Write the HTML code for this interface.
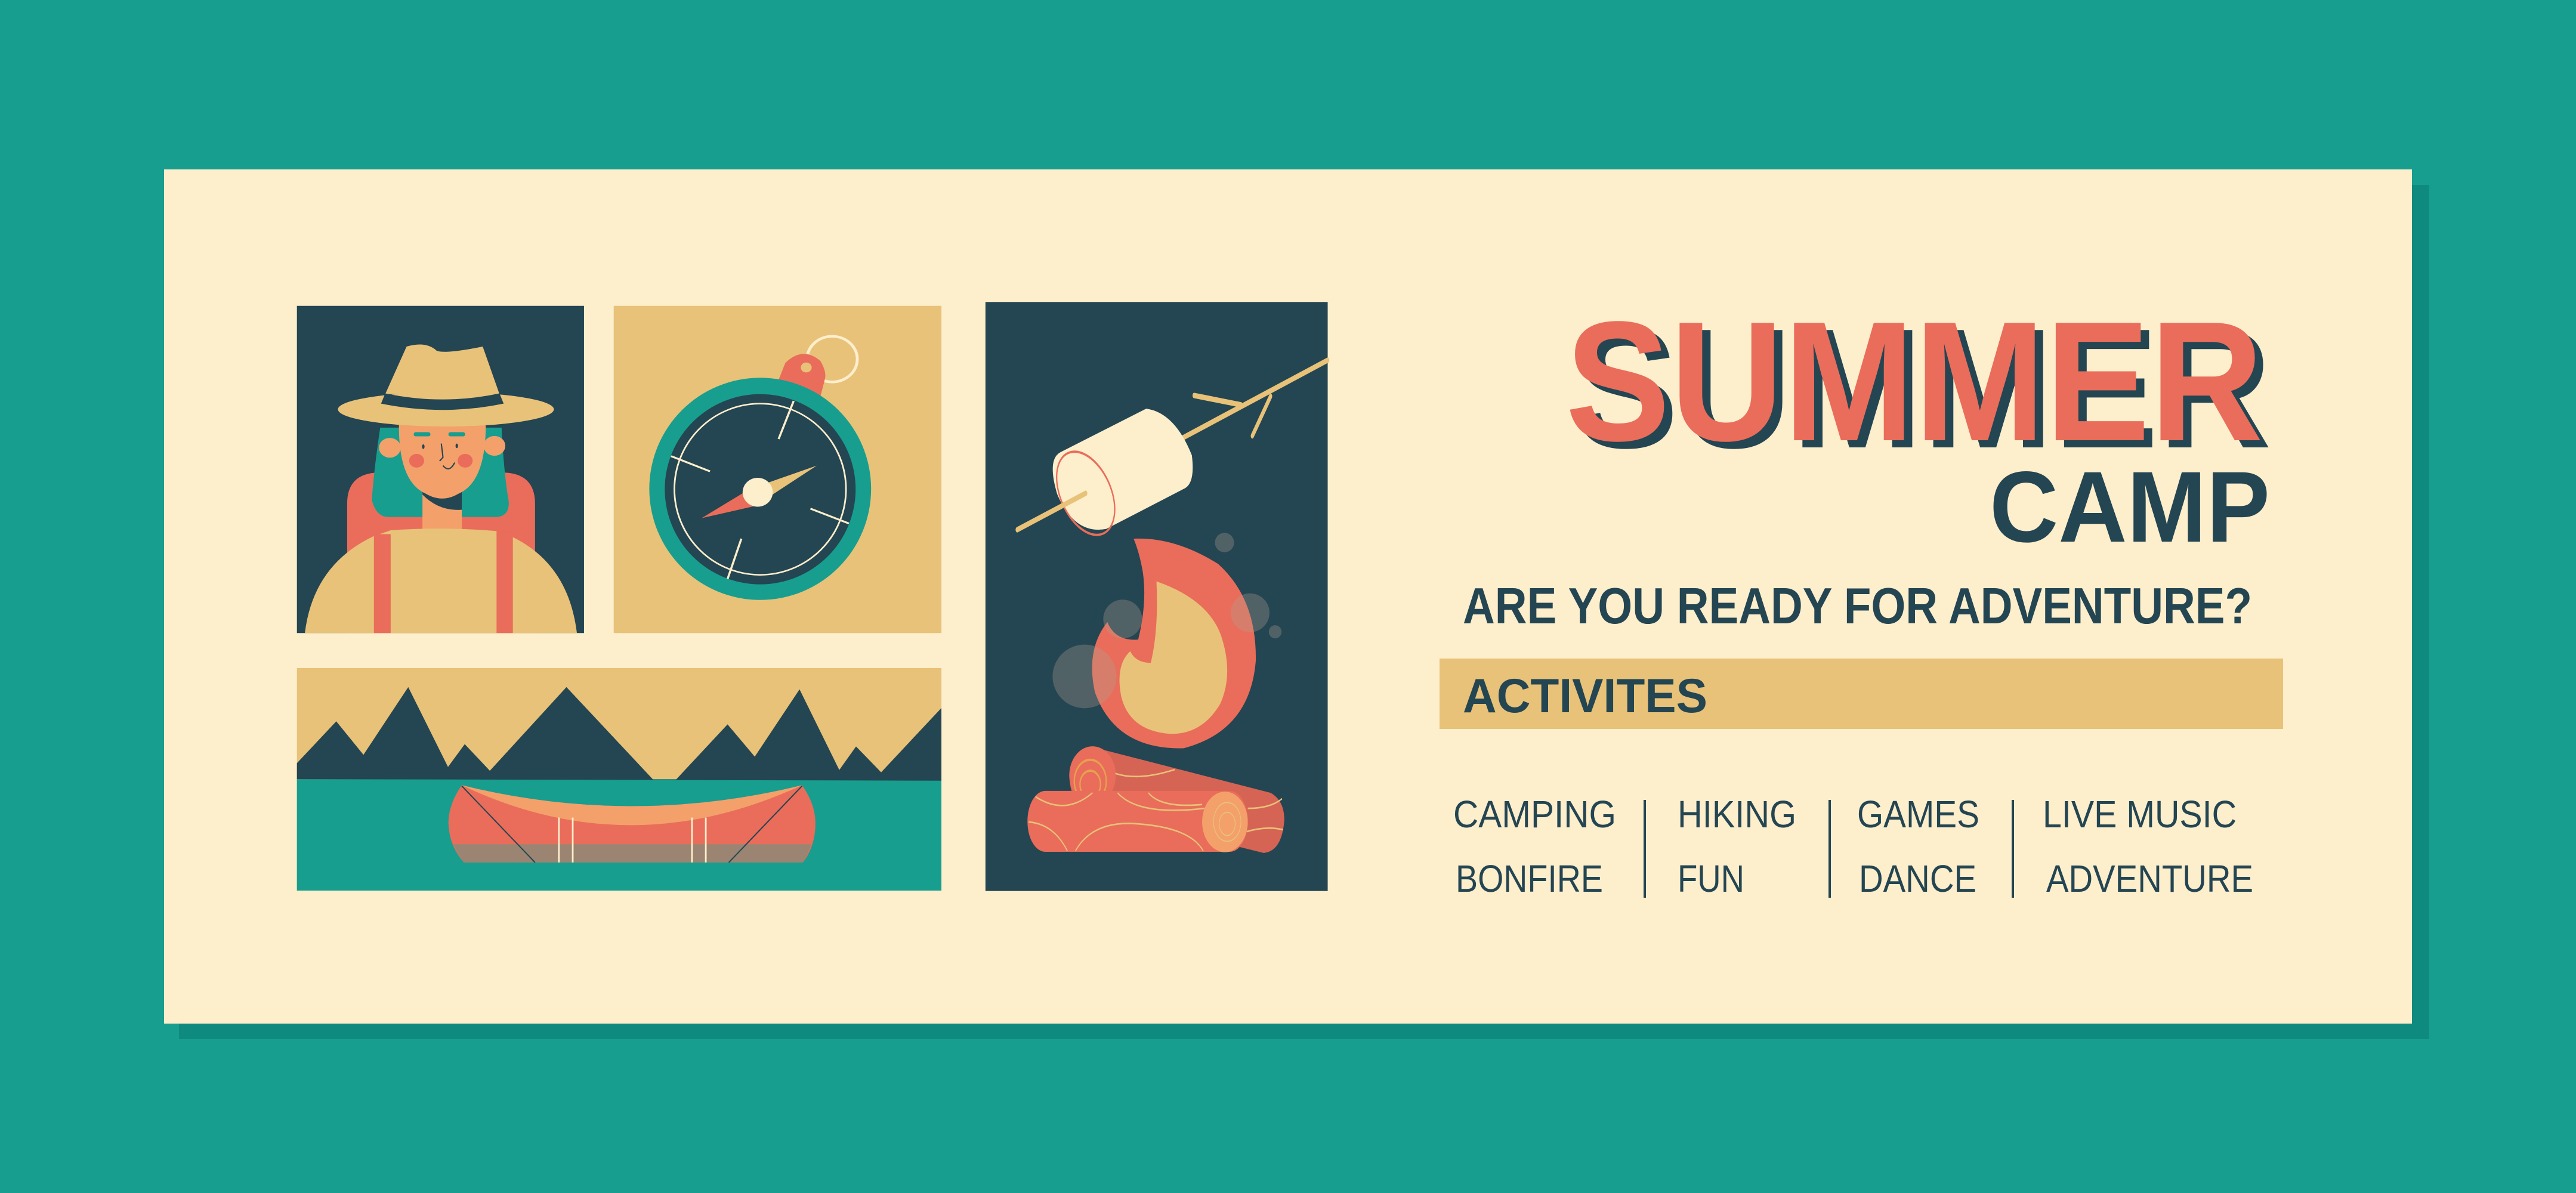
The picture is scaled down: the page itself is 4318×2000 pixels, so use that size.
<!DOCTYPE html>
<html><head><meta charset="utf-8"><style>html,body{margin:0;padding:0;background:#179e8f}svg{display:block}</style></head>
<body>
<svg width="4318" height="2000" viewBox="0 0 4318 2000" xmlns="http://www.w3.org/2000/svg">
<rect width="4318" height="2000" fill="#179e8f"/>
<rect x="300" y="310" width="3772" height="1432" fill="#0e8a7e"/>
<rect x="275" y="284" width="3768" height="1432" fill="#fdeecc"/>

<!-- zoom1 group: hiker, compass, canoe -->
<g transform="translate(490 500) scale(0.7015 0.6378)">
  <rect x="11" y="20" width="686" height="860" fill="#244552"/>
  <path d="M131 880 V540 Q131 458 210 458 H500 Q580 458 580 540 V880 Z" fill="#e96d5a"/>
  <path d="M210 340 Q195 450 190 530 Q200 575 230 575 H490 Q525 570 515 520 Q505 450 500 340 Z" fill="#179e8f"/>
  <rect x="311" y="490" width="94" height="130" fill="#f4a06b"/>
  <path d="M311 508 Q358 545 405 508 V556 Q350 560 311 516 Z" fill="#244552"/>
  <path d="M30 880 Q50 700 195 625 L235 610 Q360 600 488 612 L527 628 Q660 700 680 880 Z" fill="#e8c278"/>
  <rect x="195" y="620" width="40" height="260" fill="#e96d5a"/>
  <rect x="488" y="612" width="39" height="268" fill="#e96d5a"/>
  <circle cx="233" cy="393" r="26" fill="#f4a06b"/>
  <circle cx="483" cy="388" r="26" fill="#f4a06b"/>
  <path d="M255 320 Q250 522 358 522 Q466 522 462 320 Z" fill="#f4a06b"/>
  <rect x="290" y="352" width="40" height="11" rx="5" fill="#179e8f"/>
  <rect x="373" y="352" width="40" height="11" rx="5" fill="#179e8f"/>
  <ellipse cx="313" cy="390" rx="3" ry="6" fill="#244552"/>
  <ellipse cx="393" cy="388" rx="3" ry="6" fill="#244552"/>
  <circle cx="297" cy="427" r="18" fill="#e96d5a"/>
  <circle cx="413" cy="427" r="18" fill="#e96d5a"/>
  <path d="M356 382 L360 418 L352 428 M360 440 Q375 460 388 432" stroke="#244552" stroke-width="3" fill="none"/>
  <ellipse cx="367" cy="292" rx="258" ry="45" fill="#e8c278"/>
  <path d="M222 252 L273 127 Q320 112 345 138 Q365 147 455 127 L495 252 Z" fill="#e8c278"/>
  <path d="M222 250 Q360 282 495 250 L505 277 Q360 310 212 277 Z" fill="#244552"/>

  <rect x="768" y="20" width="783" height="860" fill="#e8c278"/>
  <circle cx="1290" cy="160" r="60" fill="none" stroke="#fdeecc" stroke-width="7"/>
  <path d="M1160 220 L1178 170 Q1220 125 1262 165 Q1278 195 1272 215 L1262 258 Z" fill="#e96d5a"/>
  <circle cx="1228" cy="182" r="13" fill="#e8c278"/>
  <ellipse cx="1118" cy="501" rx="265" ry="292" fill="#179e8f"/>
  <ellipse cx="1118" cy="502" rx="228" ry="250" fill="#244552"/>
  <ellipse cx="1118" cy="502" rx="205" ry="225" fill="none" stroke="#fdeecc" stroke-width="4"/>
  <g stroke="#fdeecc" stroke-width="5">
    <line x1="1162" y1="370" x2="1198" y2="270"/>
    <line x1="905" y1="415" x2="998" y2="455"/>
    <line x1="1238" y1="553" x2="1330" y2="592"/>
    <line x1="1073" y1="632" x2="1040" y2="738"/>
  </g>
  <path d="M1110 495 L1253 440 L1135 525 Z" fill="#e8c278"/>
  <path d="M1095 500 L978 578 L1110 545 Z" fill="#e96d5a"/>
  <ellipse cx="1112" cy="510" rx="36" ry="38" fill="#fdeecc"/>

  <rect x="11" y="972" width="1540" height="585" fill="#e8c278"/>
  <rect x="11" y="1264" width="1540" height="293" fill="#179e8f"/>
  <polygon points="11,1222 105,1112 170,1200 277,1022 372,1232 412,1172 472,1242 655,1022 862,1265 917,1265 1040,1120 1105,1205 1212,1028 1307,1240 1347,1178 1407,1246 1551,1077 1551,1268 11,1264" fill="#244552"/>
  <rect x="11" y="1264" width="1540" height="293" fill="#179e8f" opacity="0"/>
  <path d="M405 1280 Q810 1390 1218 1280 Q1250 1330 1250 1380 Q1250 1440 1220 1483 H410 Q375 1440 373 1380 Q373 1330 405 1280 Z" fill="#e96d5a"/>
  <path d="M405 1280 Q810 1390 1218 1280 Q1010 1385 810 1385 Q605 1385 405 1280 Z" fill="#f4a06b"/>
  <path d="M385 1435 H1240 Q1232 1462 1220 1483 H410 Q395 1462 385 1435 Z" fill="#9b8572"/>
  <g stroke="#fdeecc" stroke-width="4"><line x1="637" y1="1365" x2="637" y2="1483"/><line x1="670" y1="1365" x2="670" y2="1483"/><line x1="955" y1="1365" x2="955" y2="1483"/><line x1="988" y1="1365" x2="988" y2="1483"/></g>
  <g stroke="#244552" stroke-width="3"><line x1="405" y1="1282" x2="580" y2="1483"/><line x1="1218" y1="1282" x2="1043" y2="1483"/></g>
</g>

<!-- zoom2 group: fire -->
<g transform="translate(1640 490) scale(0.3827 0.6505)">
  <rect x="31" y="25" width="1499" height="1518" fill="#244552"/>
  <g stroke="#e8c278" stroke-width="14" stroke-linecap="round" fill="none">
    <line x1="880" y1="380" x2="1530" y2="175"/>
    <path d="M945 266 L1150 290"/>
    <path d="M1280 268 L1200 370"/>
  </g>
  <path d="M360 412 L735 300 Q860 310 935 420 Q950 490 905 505 L560 610 Q420 625 345 520 Q300 430 360 412 Z" fill="#fdeecc"/>
  <ellipse cx="470" cy="518" rx="140" ry="90" transform="rotate(33 470 518)" fill="none" stroke="#e96d5a" stroke-width="6"/>
  <line x1="170" y1="612" x2="470" y2="518" stroke="#e8c278" stroke-width="14" stroke-linecap="round"/>
  <path d="M520 1175 L1280 1290 Q1340 1310 1340 1360 Q1330 1440 1250 1445 L530 1340 Q400 1330 400 1250 Q410 1180 520 1175 Z" fill="#d66455"/>
  <ellipse cx="500" cy="1245" rx="102" ry="75" fill="#e96d5a"/>
  <g fill="none" stroke="#e8a050" stroke-width="6"><ellipse cx="490" cy="1260" rx="70" ry="55"/><ellipse cx="490" cy="1268" rx="45" ry="35"/></g>
  <rect x="215" y="1285" width="965" height="157" rx="78" fill="#e96d5a"/>
  <g fill="none" stroke="#e8c278" stroke-width="4">
    <path d="M250 1300 Q380 1350 500 1290"/>
    <path d="M220 1365 Q330 1370 390 1440"/>
    <path d="M425 1440 Q500 1360 700 1370 Q930 1380 985 1440"/>
    <path d="M610 1290 Q700 1350 990 1330"/>
    <path d="M745 1290 Q800 1330 980 1320"/>
    <path d="M1180 1330 Q1280 1330 1330 1305"/>
    <path d="M1175 1390 Q1260 1375 1335 1385"/>
    <path d="M600 1240 Q700 1260 860 1230"/>
  </g>
  <ellipse cx="1080" cy="1365" rx="100" ry="78" fill="#f4a06b"/>
  <g fill="none" stroke="#e8c278" stroke-width="3"><ellipse cx="1090" cy="1365" rx="60" ry="50"/><ellipse cx="1090" cy="1370" rx="35" ry="30"/></g>
  <path d="M680 635 Q860 630 1050 700 Q1220 790 1215 950 Q1190 1130 900 1175 Q600 1180 510 1030 Q470 920 565 850 Q600 900 700 895 Q740 800 720 720 Q705 670 680 635 Z" fill="#e96d5a"/>
  <path d="M780 745 Q1000 790 1060 880 Q1120 980 1060 1060 Q980 1140 840 1138 Q660 1130 625 1040 Q600 960 665 925 Q690 955 755 955 Q790 870 780 745 Z" fill="#e8c278"/>
  <g fill="#b0a090" opacity="0.32">
    <ellipse cx="1078" cy="645" rx="42" ry="25"/>
    <ellipse cx="632" cy="842" rx="85" ry="50"/>
    <ellipse cx="465" cy="990" rx="140" ry="82"/>
    <ellipse cx="1190" cy="826" rx="85" ry="50"/>
    <ellipse cx="1300" cy="875" rx="28" ry="17"/>
  </g>
</g>

<!-- text -->
<g font-family="'Liberation Sans', sans-serif" font-weight="bold">
  <text x="2638" y="750" font-size="286" fill="#244552" textLength="1170" lengthAdjust="spacingAndGlyphs">SUMMER</text>
  <text x="2624" y="738" font-size="286" fill="#e96d5a" textLength="1170" lengthAdjust="spacingAndGlyphs">SUMMER</text>
  <text x="3335" y="908" font-size="169" fill="#244552" textLength="470" lengthAdjust="spacingAndGlyphs">CAMP</text>
  <text x="2452" y="1045" font-size="85" fill="#244552" textLength="1323" lengthAdjust="spacingAndGlyphs">ARE YOU READY FOR ADVENTURE?</text>
</g>
<rect x="2413" y="1104" width="1414" height="118" fill="#e8c278"/>
<text x="2452" y="1194" font-family="'Liberation Sans', sans-serif" font-weight="bold" font-size="81" fill="#244552" textLength="410" lengthAdjust="spacingAndGlyphs">ACTIVITES</text>
<g font-family="'Liberation Sans', sans-serif" font-size="64" fill="#244552">
  <text x="2436" y="1387" textLength="273" lengthAdjust="spacingAndGlyphs">CAMPING</text>
  <text x="2812" y="1387" textLength="199" lengthAdjust="spacingAndGlyphs">HIKING</text>
  <text x="3113" y="1387" textLength="205" lengthAdjust="spacingAndGlyphs">GAMES</text>
  <text x="3424" y="1387" textLength="325" lengthAdjust="spacingAndGlyphs">LIVE MUSIC</text>
  <text x="2440" y="1495" textLength="247" lengthAdjust="spacingAndGlyphs">BONFIRE</text>
  <text x="2812" y="1495" textLength="112" lengthAdjust="spacingAndGlyphs">FUN</text>
  <text x="3116" y="1495" textLength="197" lengthAdjust="spacingAndGlyphs">DANCE</text>
  <text x="3430" y="1495" textLength="347" lengthAdjust="spacingAndGlyphs">ADVENTURE</text>
</g>
<g stroke="#244552" stroke-width="4">
  <line x1="2757" y1="1341" x2="2757" y2="1505"/>
  <line x1="3067" y1="1341" x2="3067" y2="1505"/>
  <line x1="3374" y1="1341" x2="3374" y2="1505"/>
</g>
</svg>
</body></html>
